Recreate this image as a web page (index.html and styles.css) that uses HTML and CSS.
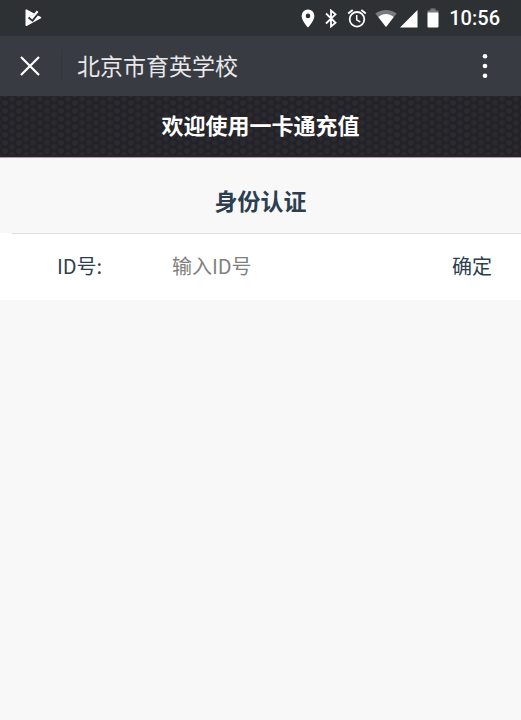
FILE: index.html
```html
<!DOCTYPE html>
<html lang="zh-CN">
<head>
<meta charset="utf-8">
<meta name="viewport" content="width=device-width, initial-scale=1">
<title>北京市育英学校</title>
<link rel="stylesheet" href="styles.css">
</head>
<body>
<div class="status">
  <svg class="status-app" width="18" height="18" viewBox="0 0 18 18" aria-hidden="true">
    <path d="M2.300 1.200v15L16.500 8.600z" fill="#fff" stroke="#fff" stroke-width="1.600" stroke-linejoin="round"/>
    <path d="M5.200 7.600l3.200 2.600L14.800 2" fill="none" stroke="#2e3134" stroke-width="4"/>
    <path d="M5.200 6.200l2.900 2.600L13.600 2.200" fill="none" stroke="#fff" stroke-width="2.200"/>
  </svg>
  <div class="status-icons">
    <svg width="14" height="19" viewBox="0 0 14 19" aria-hidden="true">
      <path fill="#fff" fill-rule="evenodd" d="M7 0.5A6.4 6.4 0 0 0 .6 6.9C.6 11.5 7 18.5 7 18.5s6.400-7 6.400-11.600A6.400 6.400 0 0 0 7 .5zM7 4.600a2.300 2.300 0 1 1 0 4.600a2.300 2.300 0 0 1 0-4.600z"/>
    </svg>
    <svg class="bluetooth" width="12" height="19" viewBox="0 0 12 19" aria-hidden="true">
      <path d="M1 4.500l9.500 9.300L6 17.500v-16l4.500 3.800L1 14.500" fill="none" stroke="#fff" stroke-width="1.800"/>
    </svg>
    <svg class="alarm" width="20" height="19" viewBox="0 0 20 19" aria-hidden="true">
      <g fill="none" stroke="#fff" stroke-width="1.8">
        <circle cx="10" cy="10.300" r="7.300"/>
        <path d="M1.200 4.500L5.700 1M18.800 4.500L14.300 1"/>
        <path d="M9.700 6v4.800l3.600 2.200" stroke-width="1.500"/>
      </g>
    </svg>
    <svg class="wifi" width="22" height="19" viewBox="0 0 22 19" aria-hidden="true">
      <path d="M11 18L.3 4.500C6.500-.3 15.500-.3 21.700 4.500z" fill="#797b7e"/>
      <path d="M11 18L3.300 8C8 4.100 14 4.100 18.700 8z" fill="#fff"/>
    </svg>
    <svg class="signal" width="18" height="19" viewBox="0 0 18 19" aria-hidden="true">
      <path d="M0 18.500h17.500V1z" fill="#fff"/>
    </svg>
    <svg class="battery" width="12" height="20" viewBox="0 0 12 20" aria-hidden="true">
      <path d="M3.500 0.500h5v2h3v3H.5v-3h3z" fill="#797b7e"/>
      <rect x=".5" y="4.500" width="11" height="15" rx="1" fill="#fff"/>
    </svg>
    <span class="clock">10:56</span>
  </div>
</div>
<header class="nav">
  <button class="close" type="button" aria-label="关闭">
    <svg width="20" height="20" viewBox="0 0 20 20" aria-hidden="true"><path d="M1 1l18 18M19 1L1 19" stroke="#fff" stroke-width="2.200"/></svg>
  </button>
  <h1 class="nav-title">北京市育英学校</h1>
  <button class="more" type="button" aria-label="更多">
    <svg width="6" height="26" viewBox="0 0 6 26" aria-hidden="true"><g fill="#fff"><circle cx="3" cy="3.300" r="2.300"/><circle cx="3" cy="13" r="2.300"/><circle cx="3" cy="22.700" r="2.300"/></g></svg>
  </button>
</header>
<main>
  <div class="banner">欢迎使用一卡通充值</div>
  <h2 class="heading">身份认证</h2>
  <form class="row">
    <label class="label" for="id-number">ID号:</label>
    <input class="field" id="id-number" type="text" placeholder="输入ID号">
    <button class="submit" type="button">确定</button>
  </form>
</main>
</body>
</html>
```
FILE: styles.css
```css
* {
  box-sizing: border-box;
}

body {
  margin: 0;
  background: #f8f8f8;
  color: #2c3e50;
  font-family: "Noto Sans CJK SC", sans-serif;
  font-size: 20px;
}

button {
  padding: 0;
  border: 0;
  background: none;
  color: inherit;
  font: inherit;
}

svg {
  display: block;
}

.status {
  display: flex;
  align-items: center;
  justify-content: space-between;
  height: 36px;
  padding: 0 21px 0 24px;
  background: #2e3134;
}

.status-icons {
  display: flex;
  align-items: center;
}

.bluetooth {
  margin-left: 10px;
}

.alarm {
  margin-left: 10px;
}

.wifi {
  margin-left: 8px;
}

.signal {
  margin-left: 3px;
}

.battery {
  margin-left: 9px;
}

.clock {
  margin-left: 10px;
  color: #fff;
  font: 500 20px/36px Roboto, sans-serif;
}

.nav {
  display: flex;
  align-items: center;
  height: 60px;
  padding-right: 33px;
  background: #393b42;
}

.close {
  display: flex;
  align-items: center;
  height: 32px;
  padding: 0 20px;
  border-right: 1px solid #33353b;
  width: 62px;
}

.nav-title {
  flex: 1;
  margin: 0;
  padding: 0 0 2px 15px;
  color: #e8e8ea;
  font-size: 23px;
  font-weight: 400;
  line-height: 32px;
}

.banner {
  height: 62px;
  border-bottom: 1px solid #a99eaa;
  background-color: #222127;
  background-image:
    radial-gradient(circle at 4px 4px, #2b2a2f 2px, transparent 4px),
    radial-gradient(circle at 4px 4px, #2b2a2f 2px, transparent 4px);
  background-position: 1px 3px, 8px 7px;
  background-size: 14px 8px;
  box-shadow: inset 0 -2px 1px #2d202d;
  color: #fff;
  font-size: 22px;
  font-weight: 700;
  line-height: 56px;
  text-align: center;
}

.heading {
  margin: 0;
  padding: 26px 0 17px;
  font-size: 23px;
  font-weight: 700;
  line-height: 32px;
  text-align: center;
}

.row {
  display: flex;
  align-items: center;
  height: 67px;
  padding: 0 29px 3px 57px;
  background: linear-gradient(#dedede, #dedede) 12px 0 / 100% 1px no-repeat #fff;
}

.label {
  width: 115px;
}

.field {
  flex: 1;
  min-width: 0;
  padding: 0;
  border: 0;
  outline: 0;
  background: none;
  color: inherit;
  font: inherit;
}

.field::placeholder {
  color: #808080;
  opacity: 1;
}
```
